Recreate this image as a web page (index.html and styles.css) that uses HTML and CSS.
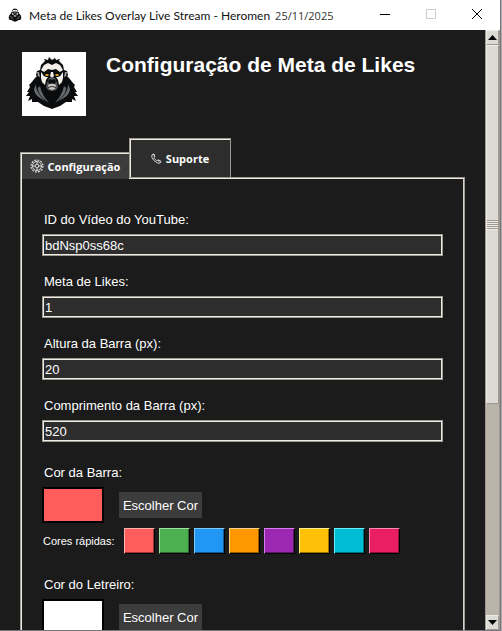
FILE: index.html
```html
<!DOCTYPE html>
<html lang="pt-BR">
<head>
  <meta charset="UTF-8">
  <meta name="viewport" content="width=device-width, initial-scale=1.0">
  <title>Meta de Likes Overlay Live Stream</title>
  <link rel="stylesheet" href="styles.css">
</head>
<body>
  <svg class="sprite" aria-hidden="true">
    <symbol id="gorila" viewBox="0 0 64 64">
      <path fill="#0b0c0e" d="M17 22L13 26L9 31L7 33L8 35L5 40L7 40L4 44L8 44L6 49L10 47L10 50L16 50L22 54L30 57L38 54L44 50L50 50L50 47L54 49L52 44L56 44L53 40L55 40L52 35L53 33L51 31L47 26L43 22Z"/>
      <path fill="#0b0c0e" d="M16 26L14 23L15 19L18 18L19 13L23 9L22 7L26 8L27 5L30 8L33 6L34 8L38 7L37 9L41 13L42 18L45 19L46 23L44 26L44 36L30 44L16 36Z"/>
      <path fill="#66686b" d="M14 32C14 39 18 44 23 49C17 46 12 42 12 37ZM18 34C19 40 22 45 27 51C21 47 16 42 16 36ZM46 32C46 39 42 44 37 49C43 46 48 42 48 37ZM42 34C41 40 38 45 33 51C39 47 44 42 44 36Z"/>
      <path fill="#a6a19e" d="M15 20L17 20L18 25L16 24ZM45 20L43 20L42 25L44 24Z"/>
      <path fill="#f4eee9" d="M22 13L26 11L30 13L34 11L38 13L41 18L38 20L34 17L30 18L26 17L22 20L19 18Z"/>
      <path fill="#f4eee9" d="M19 20L22 24L26 25L24 28L23 33L20 30L19 26ZM41 20L38 24L34 25L36 28L37 33L40 30L41 26ZM29 20h2l1 4l-2 2l-2 -2z"/>
      <path fill="#0b0c0e" d="M21 20L24 20L28 23L28 25L24 25L21 23ZM39 20L36 20L32 23L32 25L36 25L39 23Z"/>
      <path fill="#d99c20" d="M23.500 22h3v2h-3zM33.500 22h3v2h-3z"/>
      <path fill="#55575a" d="M27 26L30 25L33 26L35 31L36 35L34 38L30 39L26 38L24 35L25 31Z"/>
      <path fill="#0b0c0e" d="M26 29L28 27L30 28L32 27L34 29L33 32L30 31L27 32Z"/>
      <path fill="#c8c2be" d="M26 33L28 32L32 32L34 33L33 37L30 38L27 37Z"/>
      <path fill="#333" d="M26 35L30 34L34 35L34 36L30 35L26 36Z"/>
    </symbol>
  </svg>

  <div class="window">
    <header class="titlebar">
      <svg class="titlebar-icon" viewBox="4 4 52 54" aria-hidden="true"><use href="#gorila" width="64" height="64"/></svg>
      <span class="titlebar-text">Meta de Likes Overlay Live Stream - Heromen</span>
      <span class="titlebar-date">25/11/2025</span>
      <div class="controls">
        <button type="button" aria-label="Minimizar"><svg viewBox="0 0 12 12"><path d="M1 5.5h10"/></svg></button>
        <button type="button" aria-label="Maximizar" disabled><svg viewBox="0 0 12 12"><path d="M1.5 .5h9v9h-9z"/></svg></button>
        <button type="button" aria-label="Fechar"><svg viewBox="0 0 12 12"><path d="M1 0l10 10M11 0L1 10"/></svg></button>
      </div>
    </header>

    <div class="body">
      <main class="content">
        <div class="heading">
          <svg class="logo" viewBox="0 0 64 64" role="img" aria-label="Heromen"><use href="#gorila" width="64" height="64"/></svg>
          <h1>Configuração de Meta de Likes</h1>
        </div>

        <div class="tabs" role="tablist">
          <button type="button" class="tab active" role="tab" aria-selected="true">
            <svg class="gear" viewBox="0 0 14 14"><circle cx="7" cy="7" r="6" stroke-width="1.2" stroke-dasharray="2 1.1"/><circle cx="7" cy="7" r="4.5"/><circle cx="7" cy="7" r="1.8"/><path d="M7 2.5v2.500M7 9v2.500M2.500 7h2.500M9 7h2.500"/></svg>
            Configuração
          </button>
          <button type="button" class="tab" role="tab" aria-selected="false">
            <svg class="phone" viewBox="0 0 12 12"><path d="M1 2L3 1L4 4L3 5.500L6 8.500L8 7.500L11 9L10 11H7L3 8L1 5ZM3 1L4 4M8 7.500L9 10"/></svg>
            Suporte
          </button>
        </div>

        <form class="panel">
          <div class="field">
            <label for="video">ID do Vídeo do YouTube:</label>
            <input type="text" id="video" value="bdNsp0ss68c">
          </div>
          <div class="field">
            <label for="meta">Meta de Likes:</label>
            <input type="text" id="meta" value="1">
          </div>
          <div class="field">
            <label for="altura">Altura da Barra (px):</label>
            <input type="text" id="altura" value="20">
          </div>
          <div class="field">
            <label for="comprimento">Comprimento da Barra (px):</label>
            <input type="text" id="comprimento" value="520">
          </div>

          <div class="color-field">
            <label for="cor-barra">Cor da Barra:</label>
            <div class="picker">
              <span class="preview red"></span>
              <button type="button" class="choose" id="cor-barra">Escolher Cor</button>
            </div>
            <div class="quick">
              <span class="quick-label">Cores rápidas:</span>
              <button type="button" class="swatch red" aria-label="Vermelho"></button>
              <button type="button" class="swatch green" aria-label="Verde"></button>
              <button type="button" class="swatch blue" aria-label="Azul"></button>
              <button type="button" class="swatch orange" aria-label="Laranja"></button>
              <button type="button" class="swatch purple" aria-label="Roxo"></button>
              <button type="button" class="swatch yellow" aria-label="Amarelo"></button>
              <button type="button" class="swatch cyan" aria-label="Ciano"></button>
              <button type="button" class="swatch pink" aria-label="Rosa"></button>
            </div>
          </div>

          <div class="color-field">
            <label for="cor-letreiro">Cor do Letreiro:</label>
            <div class="picker">
              <span class="preview white"></span>
              <button type="button" class="choose" id="cor-letreiro">Escolher Cor</button>
            </div>
          </div>
        </form>
      </main>

      <div class="scrollbar">
        <button type="button" class="arrow" aria-label="Rolar para cima"><svg viewBox="0 0 9 5"><path d="M0 5L4.500 0L9 5Z"/></svg></button>
        <div class="track"><div class="thumb"><span class="grip"></span></div></div>
        <button type="button" class="arrow" aria-label="Rolar para baixo"><svg viewBox="0 0 9 5"><path d="M0 0L4.500 5L9 0Z"/></svg></button>
      </div>
    </div>
  </div>
</body>
</html>
```
FILE: styles.css
```css
* {
  box-sizing: border-box;
}

body {
  margin: 0;
  background: #a9a9ad;
  font-family: "Liberation Sans", Arial, sans-serif;
  font-size: 13px;
  color: #fff;
}

button, input {
  font: inherit;
  color: inherit;
  margin: 0;
}

.sprite {
  display: none;
}

.window {
  display: flex;
  flex-direction: column;
  height: 100vh;
  margin-right: 1px;
  border-right: 1px solid #77777b;
  border-bottom: 1px solid #77777b;
  overflow: hidden;
}

/* Barra de título */
.titlebar {
  display: flex;
  flex: none;
  align-items: center;
  height: 30px;
  padding-left: 8px;
  background: #fff;
  color: #111;
  font-family: Lato, sans-serif;
  font-size: 12px;
  white-space: nowrap;
}

.titlebar-icon {
  width: 14px;
  height: 14px;
  margin-right: 7px;
}

.titlebar-date {
  margin-left: 5px;
  color: #333;
  font-family: "Open Sans", sans-serif;
  font-size: 11px;
}

.controls {
  display: flex;
  margin-left: auto;
}

.controls button {
  display: grid;
  place-items: center;
  width: 46px;
  height: 30px;
  padding: 0;
  border: 0;
  background: none;
}

.controls svg {
  width: 12px;
  height: 12px;
  fill: none;
  stroke: #000;
}

.controls button:disabled svg {
  stroke: #ccc;
}

.body {
  display: flex;
  flex: 1;
  min-height: 0;
}

.content {
  flex: 1;
  padding: 22px 20px 0;
  background: #1b1b1b;
  overflow: hidden;
}

.heading {
  display: flex;
  gap: 20px;
  padding-left: 2px;
}

.logo {
  width: 64px;
  height: 64px;
  background: #fff;
}

h1 {
  margin: 0;
  font-size: 21px;
  line-height: 26px;
}

/* Abas */
.tabs {
  display: flex;
  align-items: flex-end;
  margin-top: 22px;
}

.tab {
  display: flex;
  align-items: center;
  justify-content: center;
  gap: 4px;
  width: 102px;
  height: 39px;
  padding: 0;
  border: 1px solid #9e9a91;
  border-bottom: 0;
  background: #2d2d2d;
  box-shadow: inset 1px 1px #eeebe7;
  font-family: "Open Sans", sans-serif;
  font-size: 11px;
  font-weight: bold;
}

/* cobre a borda do painel */
.tab.active {
  z-index: 1;
  width: 109px;
  height: 27px;
  margin-bottom: -2px;
  border-right: 0;
  background: #3c3c3c;
}

.tab svg {
  fill: none;
  stroke: #ddd;
}

.gear {
  width: 14px;
  height: 14px;
}

.phone {
  width: 11px;
  height: 11px;
}

.panel {
  height: 800px;
  padding: 33px 21px 0;
  border: 1px solid #9e9a91;
  box-shadow: inset 1px 1px #eeebe7, inset -1px 0 #d4d0c8;
}

.field {
  margin-bottom: 17px;
}

label {
  display: block;
  padding-left: 2px;
  line-height: 18px;
}

.field input {
  display: block;
  width: 100%;
  height: 22px;
  margin-top: 5px;
  padding: 0 2px;
  border: 1px solid #9e9a91;
  border-radius: 0;
  background: #2d2d2d;
  box-shadow: inset 0 0 0 1px #eeebe7;
}

.color-field {
  margin: 22px 0 21px;
}

.picker {
  display: flex;
  align-items: center;
  gap: 15px;
  margin-top: 5px;
}

.preview {
  width: 62px;
  height: 36px;
  border: 2px solid #000;
}

.choose {
  width: 83px;
  height: 26px;
  padding: 0;
  border: 0;
  background: #3c3c3c;
}

.quick {
  display: flex;
  align-items: center;
  gap: 4px;
  margin-top: 5px;
}

.quick-label {
  width: 78px;
  padding-left: 1px;
  font-size: 11px;
}

.swatch {
  width: 31px;
  height: 26px;
  padding: 0;
  border: 1px solid #000;
  box-shadow: inset -1px -1px rgba(0, 0, 0, .4);
}

.red { background-color: #ff5c5c; }
.green { background-color: #4caf50; }
.blue { background-color: #2196f3; }
.orange { background-color: #ff9800; }
.purple { background-color: #9c27b0; }
.yellow { background-color: #ffc107; }
.cyan { background-color: #00bcd4; }
.pink { background-color: #e91e63; }
.white { background-color: #fff; }

.swatch.red { border-top-color: #ffb0b0; border-left-color: #ffb0b0; }
.swatch.green { border-top-color: #a0e0a4; border-left-color: #a0e0a4; }
.swatch.blue { border-top-color: #7cc8ff; border-left-color: #7cc8ff; }
.swatch.orange { border-top-color: #ffd28a; border-left-color: #ffd28a; }
.swatch.purple { border-top-color: #d67cf0; border-left-color: #d67cf0; }
.swatch.yellow { border-top-color: #fff08a; border-left-color: #fff08a; }
.swatch.cyan { border-top-color: #6cf0ff; border-left-color: #6cf0ff; }
.swatch.pink { border-top-color: #ff8cb4; border-left-color: #ff8cb4; }

/* Barra de rolagem */
.scrollbar {
  display: flex;
  flex-direction: column;
  width: 15px;
  background: #b8b4a8;
  border-left: 1px solid #9e9a91;
  border-right: 1px solid #9e9a91;
}

.arrow {
  display: grid;
  place-items: center;
  height: 15px;
  padding: 0;
  border: 1px solid #9e9a91;
  border-top-color: #eeebe7;
  border-left-color: #eeebe7;
  background: #dcdad5;
}

.arrow svg {
  width: 9px;
  height: 5px;
}

.track {
  flex: 1;
}

.thumb {
  display: grid;
  place-items: center;
  height: 63%;
  border: 1px solid #9e9a91;
  border-top-color: #eeebe7;
  border-left-color: #eeebe7;
  background: #dcdad5;
}

.grip {
  width: 100%;
  height: 10px;
  background: repeating-linear-gradient(#9e9a91 0 1px, #eeebe7 1px 2px);
}
```
